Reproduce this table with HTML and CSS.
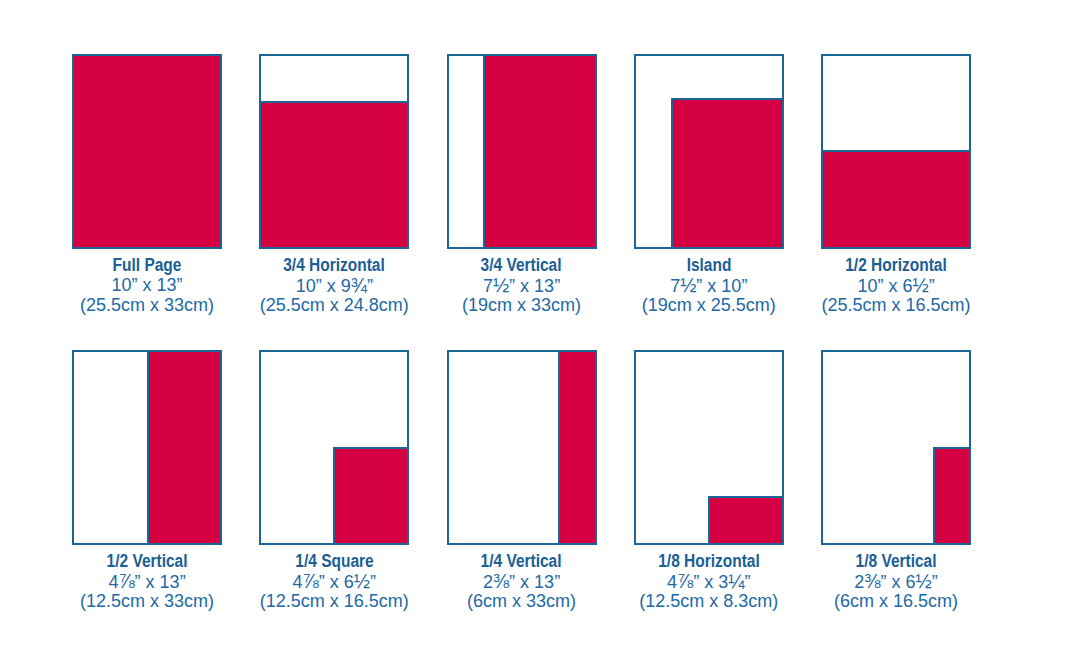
FILE: index.html
```html
<!DOCTYPE html>
<html>
<head>
<meta charset="utf-8">
<link rel="stylesheet" href="styles.css">
</head>
<body>
<div class="sheet">
  <div class="item">
    <svg class="thumb" viewBox="0 0 150 195"><rect class="page" x="1" y="1" width="148" height="193"/><rect class="ad" x="1" y="1" width="148" height="193"/></svg>
    <div class="title">Full Page</div>
    <div class="line">10” x 13”</div>
    <div class="line">(25.5cm x 33cm)</div>
  </div>
  <div class="item">
    <svg class="thumb" viewBox="0 0 150 195"><rect class="page" x="1" y="1" width="148" height="193"/><rect class="ad" x="1" y="48" width="148" height="146"/></svg>
    <div class="title">3/4 Horizontal</div>
    <div class="line">10” x 9<span class="frac">¾</span>”</div>
    <div class="line">(25.5cm x 24.8cm)</div>
  </div>
  <div class="item">
    <svg class="thumb" viewBox="0 0 150 195"><rect class="page" x="1" y="1" width="148" height="193"/><rect class="ad" x="37" y="1" width="112" height="193"/></svg>
    <div class="title">3/4 Vertical</div>
    <div class="line">7<span class="frac">½</span>” x 13”</div>
    <div class="line">(19cm x 33cm)</div>
  </div>
  <div class="item">
    <svg class="thumb" viewBox="0 0 150 195"><rect class="page" x="1" y="1" width="148" height="193"/><rect class="ad" x="38" y="45" width="111" height="149"/></svg>
    <div class="title">Island</div>
    <div class="line">7<span class="frac">½</span>” x 10”</div>
    <div class="line">(19cm x 25.5cm)</div>
  </div>
  <div class="item">
    <svg class="thumb" viewBox="0 0 150 195"><rect class="page" x="1" y="1" width="148" height="193"/><rect class="ad" x="1" y="97" width="148" height="97"/></svg>
    <div class="title">1/2 Horizontal</div>
    <div class="line">10” x 6<span class="frac">½</span>”</div>
    <div class="line">(25.5cm x 16.5cm)</div>
  </div>

  <div class="item">
    <svg class="thumb" viewBox="0 0 150 195"><rect class="page" x="1" y="1" width="148" height="193"/><rect class="ad" x="76" y="1" width="73" height="193"/></svg>
    <div class="title">1/2 Vertical</div>
    <div class="line">4<span class="frac">⅞</span>” x 13”</div>
    <div class="line">(12.5cm x 33cm)</div>
  </div>
  <div class="item">
    <svg class="thumb" viewBox="0 0 150 195"><rect class="page" x="1" y="1" width="148" height="193"/><rect class="ad" x="75" y="98" width="74" height="96"/></svg>
    <div class="title">1/4 Square</div>
    <div class="line">4<span class="frac">⅞</span>” x 6<span class="frac">½</span>”</div>
    <div class="line">(12.5cm x 16.5cm)</div>
  </div>
  <div class="item">
    <svg class="thumb" viewBox="0 0 150 195"><rect class="page" x="1" y="1" width="148" height="193"/><rect class="ad" x="112" y="1" width="37" height="193"/></svg>
    <div class="title">1/4 Vertical</div>
    <div class="line">2<span class="frac">⅜</span>” x 13”</div>
    <div class="line">(6cm x 33cm)</div>
  </div>
  <div class="item">
    <svg class="thumb" viewBox="0 0 150 195"><rect class="page" x="1" y="1" width="148" height="193"/><rect class="ad" x="75" y="147" width="74" height="47"/></svg>
    <div class="title">1/8 Horizontal</div>
    <div class="line">4<span class="frac">⅞</span>” x 3<span class="frac">¼</span>”</div>
    <div class="line">(12.5cm x 8.3cm)</div>
  </div>
  <div class="item">
    <svg class="thumb" viewBox="0 0 150 195"><rect class="page" x="1" y="1" width="148" height="193"/><rect class="ad" x="113" y="98" width="36" height="96"/></svg>
    <div class="title">1/8 Vertical</div>
    <div class="line">2<span class="frac">⅜</span>” x 6<span class="frac">½</span>”</div>
    <div class="line">(6cm x 16.5cm)</div>
  </div>
</div>
</body>
</html>
```

FILE: styles.css
```css
html, body {
  margin: 0;
  padding: 0;
  background: #ffffff;
}

.sheet {
  display: grid;
  grid-template-columns: repeat(5, 150px);
  column-gap: 37.25px;
  row-gap: 35px;
  padding: 54px 0 0 72px;
  font-family: "Liberation Sans", Arial, sans-serif;
  color: #2169a6;
}

.item {
  display: flex;
  flex-direction: column;
  align-items: center;
  width: 150px;
}

.thumb {
  display: block;
  width: 150px;
  height: 195px;
  margin-bottom: 6px;
}

.page {
  fill: #ffffff;
  stroke: #1c6597;
  stroke-width: 2;
}

.ad {
  fill: #d40042;
  stroke: #1c6597;
  stroke-width: 2;
}

.title {
  font-family: "Liberation Sans", Arial, sans-serif;
  font-weight: bold;
  font-size: 18px;
  line-height: 20px;
  height: 20px;
  color: #1b5f95;
  white-space: nowrap;
  transform: scaleX(0.86);
}

.line {
  font-size: 18px;
  line-height: 20px;
  height: 20px;
  white-space: nowrap;
}

.frac {
  font-size: 1.08em;
}
```
